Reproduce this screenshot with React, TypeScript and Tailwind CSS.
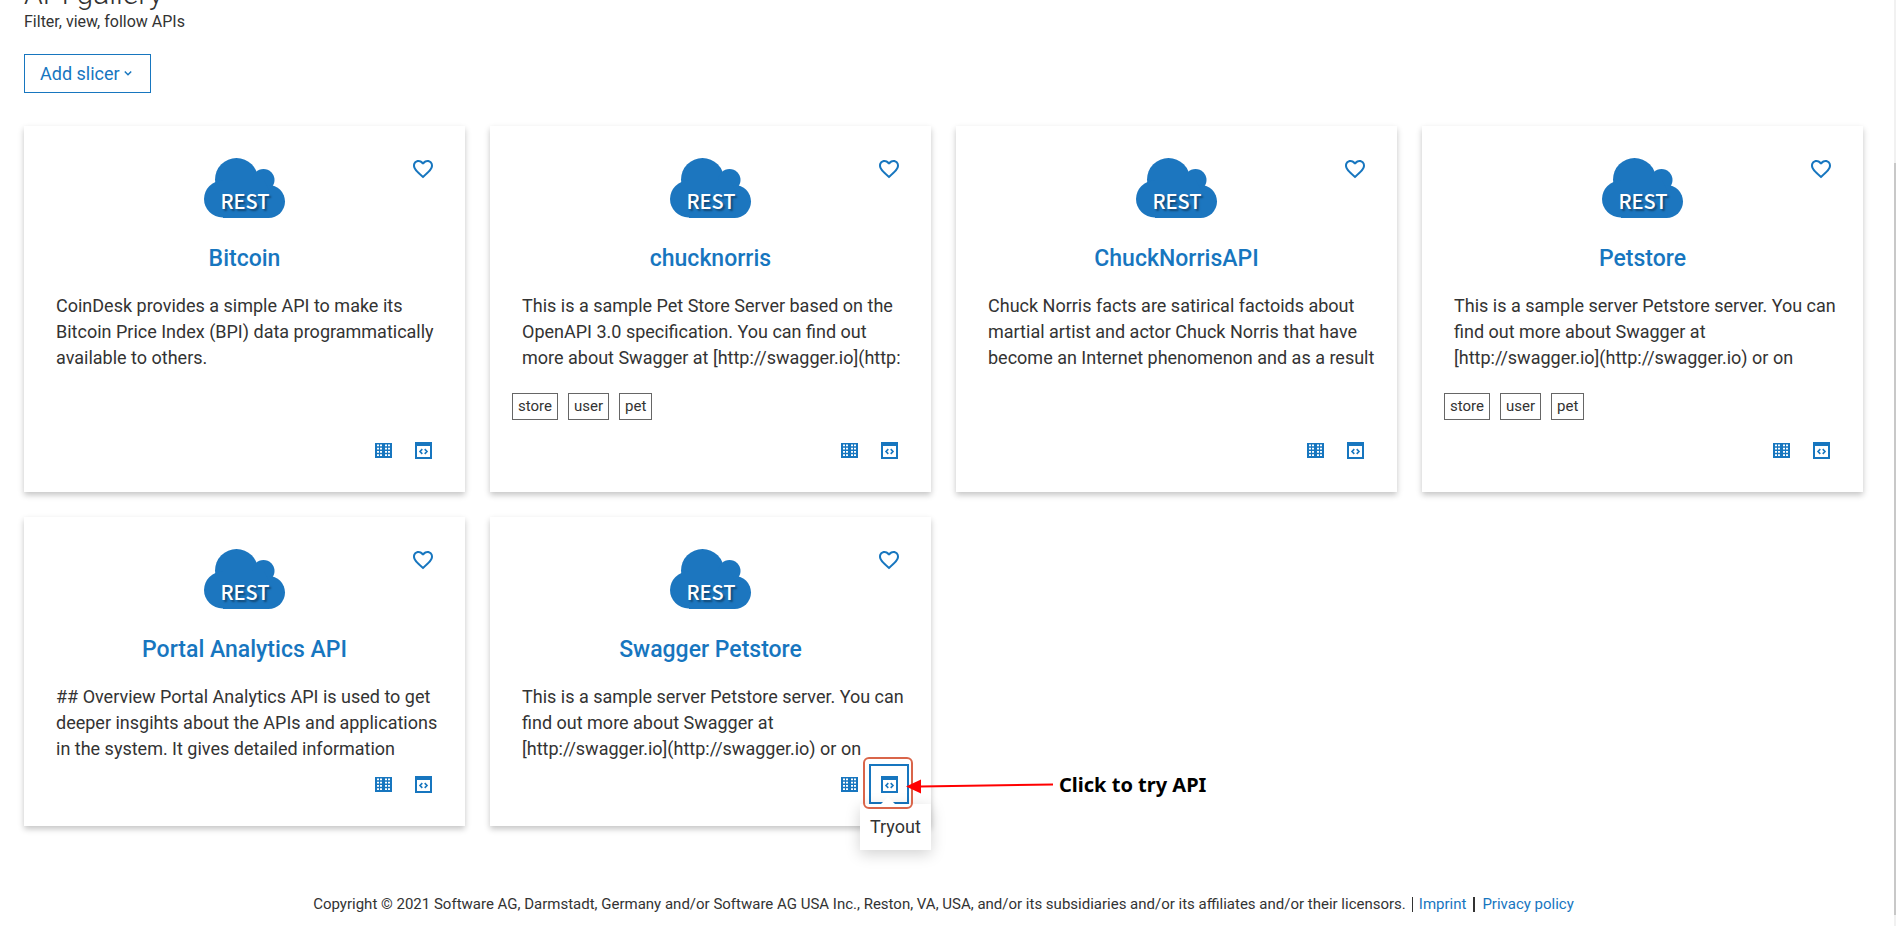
import { ReactNode } from "react";

type Api = { name: string; lines: string[]; tags?: string[]; tryout?: boolean };

const apis: Api[] = [
  {
    name: "Bitcoin",
    lines: ["CoinDesk provides a simple API to make its", "Bitcoin Price Index (BPI) data programmatically", "available to others."],
  },
  {
    name: "chucknorris",
    lines: ["This is a sample Pet Store Server based on the", "OpenAPI 3.0 specification. You can find out", "more about Swagger at [http://swagger.io](http:"],
    tags: ["store", "user", "pet"],
  },
  {
    name: "ChuckNorrisAPI",
    lines: ["Chuck Norris facts are satirical factoids about", "martial artist and actor Chuck Norris that have", "become an Internet phenomenon and as a result"],
  },
  {
    name: "Petstore",
    lines: ["This is a sample server Petstore server. You can", "find out more about Swagger at", "[http://swagger.io](http://swagger.io) or on"],
    tags: ["store", "user", "pet"],
  },
  {
    name: "Portal Analytics API",
    lines: ["## Overview Portal Analytics API is used to get", "deeper insgihts about the APIs and applications", "in the system. It gives detailed information"],
  },
  {
    name: "Swagger Petstore",
    lines: ["This is a sample server Petstore server. You can", "find out more about Swagger at", "[http://swagger.io](http://swagger.io) or on"],
    tryout: true,
  },
];

function Cloud() {
  return (
    <svg className="h-[60px] w-[82px]" viewBox="0 0 82 60" aria-label="REST">
      <g fill="#1c76bf">
        <circle cx="32.5" cy="21.5" r="21.5" />
        <circle cx="59.5" cy="22" r="11" />
        <circle cx="18.5" cy="41" r="18.5" />
        <circle cx="64.5" cy="43.5" r="16.5" />
        <path d="M19 22h41l6 12-1 26H19z" />
      </g>
      <text
        x="41"
        y="50.5"
        textAnchor="middle"
        className="fill-white font-['Noto_Sans_CJK_SC',sans-serif] text-[20px] font-medium [text-shadow:2px_2px_2px_rgba(0,0,0,0.4)]"
      >
        REST
      </text>
    </svg>
  );
}

function Heart() {
  return (
    <svg className="size-6" viewBox="0 0 24 24" fill="currentColor">
      <path d="M16.5 3c-1.74 0-3.41.81-4.5 2.09C10.91 3.81 9.24 3 7.5 3 4.42 3 2 5.42 2 8.5c0 3.78 3.4 6.86 8.55 11.54L12 21.35l1.45-1.32C18.6 15.36 22 12.28 22 8.5 22 5.42 19.58 3 16.5 3zm-4.4 15.55-.1.1-.1-.1C7.14 14.24 4 11.39 4 8.5 4 6.5 5.5 5 7.5 5c1.54 0 3.04.99 3.57 2.36h1.87C13.46 5.99 14.96 5 16.5 5c2 0 3.5 1.5 3.5 3.5 0 2.89-3.14 5.74-7.9 10.05z" />
    </svg>
  );
}

function TableIcon() {
  return (
    <svg className="size-[17px]" viewBox="0 0 17 17">
      <path d="M0 1h17v15H0z" fill="currentColor" />
      <g fill="#fff">
        {[2.6, 5.8, 9, 12.2].map((y) => (
          <path key={y} d={`M2 ${y}h2v1.700H2zM5 ${y}h2v1.700H5zM10 ${y}h2v1.700h-2zM13 ${y}h2v1.700h-2z`} />
        ))}
      </g>
    </svg>
  );
}

function CodeIcon() {
  return (
    <svg className="size-[17px]" viewBox="0 0 17 17">
      <path d="M0 0h17v17H0z" fill="currentColor" />
      <path d="M2 4h13v11H2z" fill="#fff" />
      <path d="M7.3 7.1 5 9.5l2.3 2.4M9.700 7.1l2.300 2.400-2.300 2.400" fill="none" stroke="currentColor" strokeWidth="1.6" />
    </svg>
  );
}

function IconButton({ label, className = "", children }: { label: string; className?: string; children: ReactNode }) {
  return (
    <button type="button" aria-label={label} className={`flex size-10 items-center justify-center text-[#1776bf] ${className}`}>
      {children}
    </button>
  );
}

function Tryout() {
  return (
    <div className="relative">
      <IconButton label="Tryout" className="border-2 border-[#1776bf]">
        <CodeIcon />
      </IconButton>
      <div className="absolute -top-[7px] -left-[6px] z-20 h-[52px] w-[50px] rounded-md border-2 border-[#d9654a]" />
      <div role="tooltip" className="absolute top-10 -left-[9px] z-10 bg-white px-[10px] py-[10px] text-lg leading-[26px] shadow-[0_4px_14px_rgba(0,0,0,0.18)]">
        <svg className="absolute -top-[7px] left-5 h-2 w-4" viewBox="0 0 16 8">
          <path d="M0 8 8 0l8 8z" fill="#fff" />
        </svg>
        Tryout
      </div>
      <div className="absolute top-[9px] left-[37px] z-30 flex items-center gap-[6px]">
        <svg className="h-[18px] w-[147px]" viewBox="0 0 147 18">
          <path d="M14 10.5 147 8.5" stroke="#f00" strokeWidth="2" />
          <path d="M0 10.5 15 3.5v14z" fill="#f00" />
        </svg>
        <span className="whitespace-nowrap font-['Noto_Sans',sans-serif] text-xl leading-6 font-bold text-black">Click to try API</span>
      </div>
    </div>
  );
}

function Card({ api }: { api: Api }) {
  return (
    <article className="relative flex flex-col bg-white px-8 pt-8 pb-[22px] shadow-[0_3px_6px_rgba(0,0,0,0.23)]">
      <div className="absolute top-[23px] right-[22px]">
        <IconButton label="Follow">
          <Heart />
        </IconButton>
      </div>
      <div className="flex justify-center">
        <Cloud />
      </div>
      <h2 className="mt-[23px] text-center text-[23px] leading-9 font-medium text-[#1776bf]">{api.name}</h2>
      <p className="mt-4 mb-[2px] text-lg leading-[26px] whitespace-pre">{api.lines.join("\n")}</p>
      {api.tags && (
        <ul className="mt-5 mb-[10px] -ml-[10px] flex gap-[10px]">
          {api.tags.map((t) => (
            <li key={t} className="border border-[#666] px-[5px] text-[15px] leading-[25px]">
              {t}
            </li>
          ))}
        </ul>
      )}
      <div className="mt-auto -mr-[10px] flex justify-end">
        <IconButton label="Details">
          <TableIcon />
        </IconButton>
        {api.tryout ? (
          <Tryout />
        ) : (
          <IconButton label="Tryout">
            <CodeIcon />
          </IconButton>
        )}
      </div>
    </article>
  );
}

export default function App() {
  return (
    <div className="flex h-screen overflow-hidden bg-white font-[Roboto,sans-serif] text-[#333]">
      <main className="flex min-w-0 flex-1 flex-col justify-end pr-[31px] pl-6">
        <header>
          <h1 className="text-3xl leading-8 font-light">API gallery</h1>
          <p className="text-base leading-6">Filter, view, follow APIs</p>
        </header>
        <div className="mt-5">
          <button type="button" className="flex h-[39px] w-[127px] items-center gap-1 border border-[#1776bf] pl-[15px] text-lg text-[#1776bf]">
            Add slicer
            <svg className="size-2" viewBox="0 0 8 8" fill="none" stroke="currentColor" strokeWidth="1.5">
              <path d="M.8 1.500l3.200 3.200 3.200-3.200" />
            </svg>
          </button>
        </div>
        <section className="mt-[33px] grid grid-cols-4 gap-[25px]">
          {apis.map((a) => (
            <Card key={a.name} api={a} />
          ))}
        </section>
        <footer className="mt-[66px] mb-[10px] flex items-center justify-center text-[15px] leading-6">
          <span>Copyright © 2021 Software AG, Darmstadt, Germany and/or Software AG USA Inc., Reston, VA, USA, and/or its subsidiaries and/or its affiliates and/or their licensors.</span>
          <span className="mx-[6px] h-[15px] w-px bg-[#333]" />
          <a href="#imprint" className="text-[#1776bf]">Imprint</a>
          <span className="mx-[7px] h-[15px] w-[2px] bg-[#333]" />
          <a href="#privacy" className="text-[#1776bf]">Privacy policy</a>
        </footer>
      </main>
      <div className="w-[2px] bg-[#f1f1f1] pt-[163px] pb-[11px]">
        <div className="h-full bg-[#c8c8c8]" />
      </div>
    </div>
  );
}
